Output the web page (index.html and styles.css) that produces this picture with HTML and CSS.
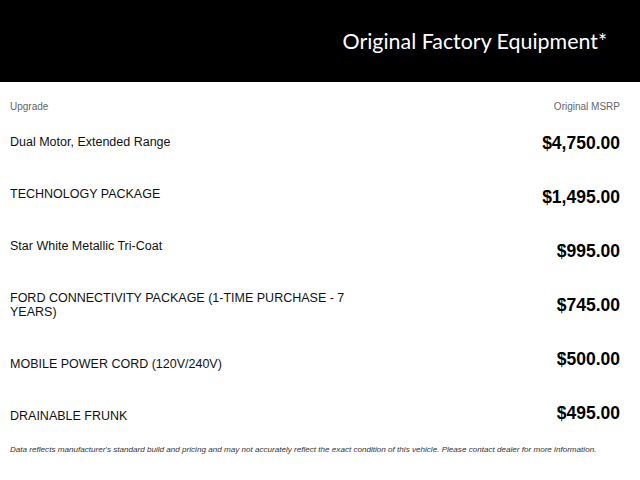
FILE: index.html
```html
<!DOCTYPE html>
<html>
<head>
<meta charset="utf-8">
<link rel="stylesheet" href="styles.css">
</head>
<body>
<header class="banner"><h1 class="title">Original Factory Equipment*</h1></header>
<main class="table">
  <div class="col col-left">
    <div class="label">Upgrade</div>
    <div class="item">Dual Motor, Extended Range</div>
    <div class="item">TECHNOLOGY PACKAGE</div>
    <div class="item">Star White Metallic Tri-Coat</div>
    <div class="item">FORD CONNECTIVITY PACKAGE (1-TIME PURCHASE - 7 YEARS)</div>
    <div class="item">MOBILE POWER CORD (120V/240V)</div>
    <div class="item">DRAINABLE FRUNK</div>
  </div>
  <div class="col col-right">
    <div class="label">Original MSRP</div>
    <div class="price">$4,750.00</div>
    <div class="price">$1,495.00</div>
    <div class="price">$995.00</div>
    <div class="price">$745.00</div>
    <div class="price">$500.00</div>
    <div class="price">$495.00</div>
  </div>
</main>
<p class="note">Data reflects manufacturer's standard build and pricing and may not accurately reflect the exact condition of this vehicle. Please contact dealer for more information.</p>
</body>
</html>
```
FILE: styles.css
```css
html, body {
  margin: 0;
  padding: 0;
  background: #fff;
  font-family: "Liberation Sans", Arial, sans-serif;
  color: #111;
}
.banner {
  height: 82px;
  background: #000;
  display: flex;
  align-items: center;
  justify-content: flex-end;
  padding-right: 33px;
}
.title {
  margin: 0;
  font-family: Lato, "Open Sans", sans-serif;
  font-weight: 400;
  font-size: 21.4px;
  color: #fff;
  line-height: 24px;
}
.table {
  display: flex;
  justify-content: space-between;
  padding: 18px 20px 0 10px;
}
.col {
  display: flex;
  flex-direction: column;
}
.col-left {
  width: 360px;
}
.col-right {
  align-items: flex-end;
}
.label {
  font-size: 10px;
  line-height: 13px;
  color: #666;
}
.col-left .label {
  margin-bottom: 22px;
}
.col-right .label {
  margin-bottom: 20px;
}
.item {
  font-size: 12.5px;
  line-height: 14px;
  margin-bottom: 38px;
}
.item:last-child {
  margin-bottom: 0;
}
.price {
  font-size: 17.5px;
  line-height: 20px;
  font-weight: 700;
  color: #000;
  margin-bottom: 34px;
}
.price:last-child {
  margin-bottom: 0;
}
.note {
  margin: 21px 0 0 10px;
  font-size: 8.1px;
  line-height: 11px;
  font-style: italic;
  color: #333;
}
```
